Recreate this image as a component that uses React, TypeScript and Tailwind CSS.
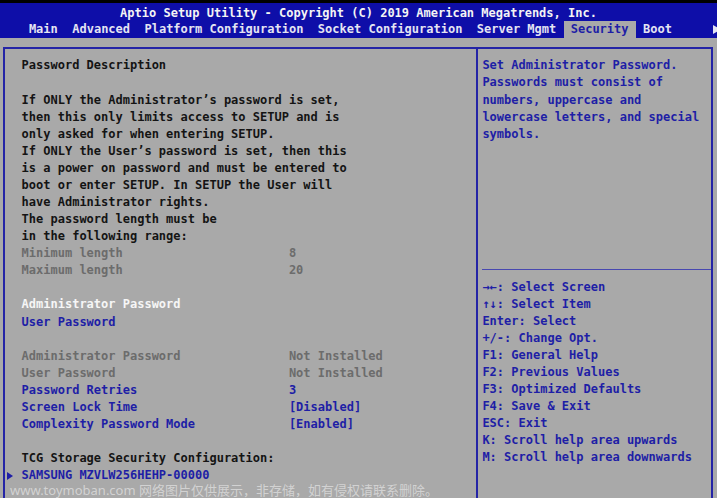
import React from "react";

type Row = { label: string; value?: string; tone?: "k" | "g" | "w" | "b"; arrow?: boolean };

const tabs = ["Main", "Advanced", "Platform Configuration", "Socket Configuration", "Server Mgmt", "Security", "Boot"];

const rows: Row[] = [
  { label: "Password Description", tone: "k" },
  { label: "" },
  { label: "If ONLY the Administrator’s password is set,", tone: "k" },
  { label: "then this only limits access to SETUP and is", tone: "k" },
  { label: "only asked for when entering SETUP.", tone: "k" },
  { label: "If ONLY the User’s password is set, then this", tone: "k" },
  { label: "is a power on password and must be entered to", tone: "k" },
  { label: "boot or enter SETUP. In SETUP the User will", tone: "k" },
  { label: "have Administrator rights.", tone: "k" },
  { label: "The password length must be", tone: "k" },
  { label: "in the following range:", tone: "k" },
  { label: "Minimum length", value: "8", tone: "g" },
  { label: "Maximum length", value: "20", tone: "g" },
  { label: "" },
  { label: "Administrator Password", tone: "w" },
  { label: "User Password", tone: "b" },
  { label: "" },
  { label: "Administrator Password", value: "Not Installed", tone: "g" },
  { label: "User Password", value: "Not Installed", tone: "g" },
  { label: "Password Retries", value: "3", tone: "b" },
  { label: "Screen Lock Time", value: "[Disabled]", tone: "b" },
  { label: "Complexity Password Mode", value: "[Enabled]", tone: "b" },
  { label: "" },
  { label: "TCG Storage Security Configuration:", tone: "k" },
  { label: "SAMSUNG MZVLW256HEHP-00000", tone: "b", arrow: true },
];

const help = [
  "Set Administrator Password.",
  "Passwords must consist of",
  "numbers, uppercase and",
  "lowercase letters, and special",
  "symbols.",
];

const keys = [
  "→←: Select Screen",
  "↑↓: Select Item",
  "Enter: Select",
  "+/-: Change Opt.",
  "F1: General Help",
  "F2: Previous Values",
  "F3: Optimized Defaults",
  "F4: Save & Exit",
  "ESC: Exit",
  "K: Scroll help area upwards",
  "M: Scroll help area downwards",
];

const toneClass = {
  k: "text-[#141414]",
  g: "text-[#6c6c6c]",
  w: "text-[#f6f6f6]",
  b: "text-[#1e1ea6]",
};

export default function App() {
  return (
    <div className="relative w-[717px] h-[498px] overflow-hidden bg-[#a9a9a9] font-['DejaVu_Sans_Mono','Liberation_Mono',monospace] font-bold text-[12px] leading-[17.08px] whitespace-pre">
      {/* header */}
      <div className="h-[3px] bg-black" />
      <div className="bg-[#0e0ea8] text-[#f4f4f4]">
        <div className="h-[18px] leading-[20px] text-center">
          Aptio Setup Utility - Copyright (C) 2019 American Megatrends, Inc.
        </div>
        <div className="flex h-[17px] leading-[17px] pl-[3ch]">
          {tabs.map((t) => (
            <span
              key={t}
              className={t === "Security" ? "px-[1ch] bg-[#a9a9a9] text-[#1e1ea6]" : "px-[1ch] text-[#e4e4f2]"}
            >
              {t}
            </span>
          ))}
          <svg className="ml-auto mr-[-4px] mt-[4px]" width="8" height="9" viewBox="0 0 8 9">
            <path d="M0 0 L8 4.5 L0 9 Z" fill="#e4e4f2" />
          </svg>
        </div>
      </div>

      {/* frame */}
      <div className="flex ml-[3px] mt-[9px] h-[460px]">
        <div className="w-[473px] border-l-2 border-t-2 border-[#2424a6] pl-[16.6px] pt-[8.4px]">
          {rows.map((r, i) => (
            <div key={i} className={`flex h-[17.08px] ${r.tone ? toneClass[r.tone] : ""}`}>
              {r.arrow && (
                <span className="-ml-[2ch] w-[2ch] flex items-center">
                  <svg width="6" height="8" viewBox="0 0 6 8">
                    <path d="M0 0 L6 4 L0 8 Z" fill="#1e1ea6" />
                  </svg>
                </span>
              )}
              <span className="w-[37ch]">{r.label}</span>
              {r.value && <span>{r.value}</span>}
            </div>
          ))}
        </div>
        <div className="w-[237px] border-l-2 border-r-2 border-t-2 border-[#2424a6] flex flex-col text-[#1e1ea6]">
          <div className="h-[220px] pl-[4.4px] pt-[8.4px]">
            {help.map((h) => (
              <div key={h} className="h-[17.08px]">{h}</div>
            ))}
          </div>
          <div className="ml-[4px] border-t border-[#4848b0]" />
          <div className="pl-[4.4px] pt-[8.6px]">
            {keys.map((k) => (
              <div key={k} className="h-[17.08px]">{k}</div>
            ))}
          </div>
        </div>
      </div>

      {/* image-site watermark */}
      <div className="absolute left-[10px] top-[481px] font-['Noto_Sans','Noto_Sans_CJK_SC',sans-serif] font-normal text-[13px] leading-[18px] text-[#d8d8d8]/90">
        www.toymoban.com 网络图片仅供展示，非存储，如有侵权请联系删除。
      </div>
    </div>
  );
}
